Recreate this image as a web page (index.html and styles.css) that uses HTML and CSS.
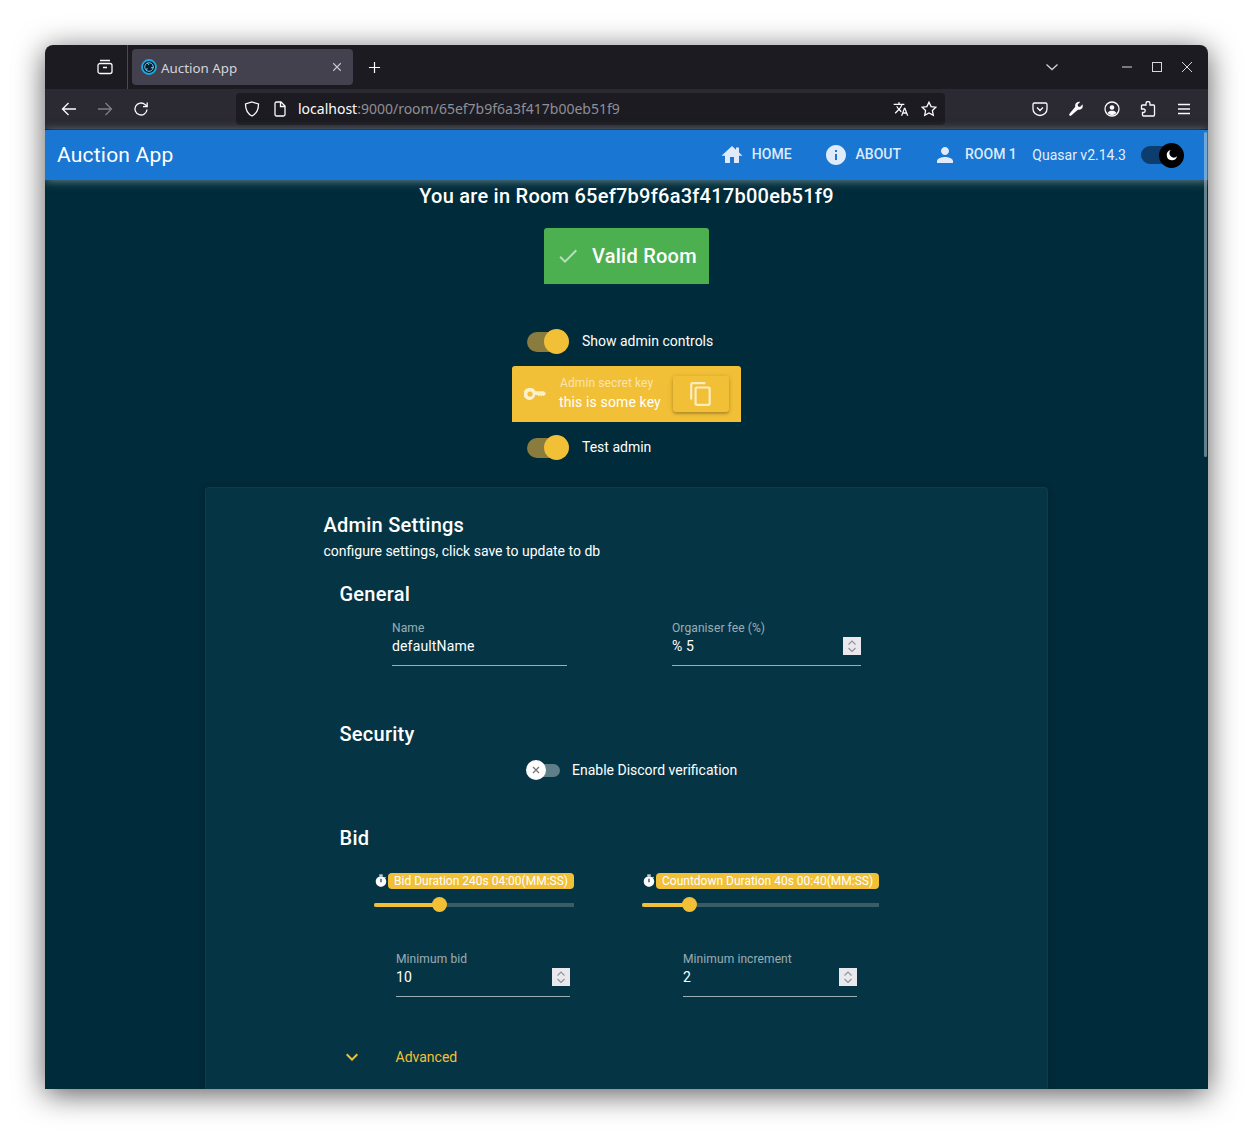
FILE: index.html
```html
<!DOCTYPE html>
<html lang="en">
<head>
    <meta charset="UTF-8">
    <meta name="viewport" content="width=device-width, initial-scale=1.0">
    <title>Auction App</title>
    <link rel="stylesheet" href="styles.css">
</head>
<body>
    <div class="window">
        <div class="tabbar">
            <svg class="view-icon" viewBox="0 0 16 16"><path d="M3 1.500h10M3 4.500h10a2 2 0 0 1 2 2v6a2 2 0 0 1-2 2H3a2 2 0 0 1-2-2v-6a2 2 0 0 1 2-2zM6 8.500h4"/></svg>
            <span class="tab-sep"></span>
            <div class="tab">
                <svg class="favicon" viewBox="0 0 16 16"><circle cx="8" cy="8" r="7" fill="#0a1c28" stroke="#1ba8e4" stroke-width="1.800"/><path d="M8 3.700a4.300 4.300 0 0 1 3.700 6.500M11.700 10.200A4.300 4.300 0 0 1 4.300 10.200M4.300 10.200A4.300 4.300 0 0 1 8 3.700M8 6 6.200 3.900M9.800 8.900l2.700-.5M6.200 9.100 5.300 11.700" fill="none" stroke="#6cc8ee" stroke-width="1"/></svg>
                <span class="tab-title">Auction App</span>
                <svg class="tab-close" viewBox="0 0 12 12"><path d="M1.500 1.500l9 9M10.500 1.500l-9 9"/></svg>
            </div>
            <svg class="new-tab" viewBox="0 0 14 14"><path d="M7 1v12M1 7h12"/></svg>
            <svg class="tab-list" viewBox="0 0 14 8"><path d="M1.500 1.500 7 6.500l5.500-5"/></svg>
            <div class="win-buttons">
                <svg viewBox="0 0 12 12"><path d="M1 6h10"/></svg>
                <svg viewBox="0 0 12 12"><rect x="1.500" y="1.500" width="9" height="9"/></svg>
                <svg viewBox="0 0 12 12"><path d="M1 1l10 10M11 1 1 11"/></svg>
            </div>
        </div>

        <div class="toolbar">
            <div class="nav-buttons">
                <svg viewBox="0 0 16 16"><path d="M15 8H1.500M7.500 2 1.500 8l6 6"/></svg>
                <svg class="off" viewBox="0 0 16 16"><path d="M1 8h13.500M8.500 2l6 6-6 6"/></svg>
                <svg viewBox="0 0 16 16"><path d="M14 8.500A6 6 0 1 1 12 3.500L14 5.500M14.200 1.500v4.200H10"/></svg>
            </div>
            <div class="urlbar">
                <svg class="url-icon" viewBox="0 0 16 16"><path d="M8 1 14.500 3c0 6-1.500 9.500-6.500 12C3 12.500 1.500 9 1.500 3z"/></svg>
                <svg class="url-icon page-icon" viewBox="0 0 16 16"><path d="M3 2.500A1.500 1.500 0 0 1 4.500 1H9l4 4v8.500a1.500 1.500 0 0 1-1.500 1.500h-7A1.500 1.500 0 0 1 3 13.500zM8.500 1.500V5.500h4.500"/></svg>
                <span class="url-text">localhost<span class="url-rest">:9000/room/65ef7b9f6a3f417b00eb51f9</span></span>
                <svg class="url-icon translate-icon" viewBox="0 0 24 24"><path class="fill" d="M12.870 15.070l-2.540-2.510.030-.030A17.520 17.520 0 0 0 14.070 6H17V4h-7V2H8v2H1v2h11.170C11.500 7.920 10.440 9.750 9 11.350 8.070 10.320 7.300 9.190 6.690 8h-2c.73 1.630 1.730 3.170 2.980 4.560l-5.090 5.020L4 19l5-5 3.110 3.110.760-2.040zM18.500 10h-2L12 22h2l1.120-3h4.750L21 22h2l-4.500-12zm-2.620 7l1.620-4.330L19.120 17h-3.240z"/></svg>
                <svg class="url-icon" viewBox="0 0 16 16"><path d="M8 1.200l2.100 4.400 4.700.6-3.400 3.300.9 4.800L8 12l-4.300 2.300.9-4.800L1.200 6.200l4.700-.6z"/></svg>
            </div>
            <div class="tool-buttons">
                <svg viewBox="0 0 16 16"><path d="M2.500 2h11A1.500 1.500 0 0 1 15 3.500V8a7 6.500 0 0 1-14 0V3.500A1.500 1.500 0 0 1 2.500 2zM5 6.500l3 3 3-3"/></svg>
                <svg viewBox="0 0 16 16"><path class="fill" d="M14.600 3.300 12 5.900l-1.900-.5-.5-1.900 2.600-2.600C10.700.6 9.200.9 8.200 1.900 7.200 2.900 6.900 4.400 7.300 5.700L1.500 12.800c-.5.600-.5 1.200 0 1.700.5.500 1.100.5 1.700 0l6.700-5.800c1.300.4 2.800.1 3.800-.9 1-1 1.300-2.500.9-3.800z"/></svg>
                <svg viewBox="0 0 16 16"><circle cx="8" cy="8" r="7"/><circle class="fill" cx="8" cy="6.500" r="2.300"/><path class="fill" d="M3.500 12c1-1.700 2.500-2.300 4.500-2.300s3.500.6 4.500 2.300A6.500 6.500 0 0 1 8 14.200 6.500 6.500 0 0 1 3.500 12z"/></svg>
                <svg viewBox="0 0 16 16"><path d="M6 3V2.500a2 2 0 0 1 4 0V4h3.500A1 1 0 0 1 14.500 5v9a1 1 0 0 1-1 1H3.500a1 1 0 0 1-1-1v-2.500H3.500a1.700 1.700 0 0 0 0-3.500h-2V5a1 1 0 0 1 1-1H6z"/></svg>
                <svg viewBox="0 0 16 16"><path d="M2 3.500h12M2 8h12M2 12.500h12"/></svg>
            </div>
        </div>

        <header class="app-header">
            <div class="app-title">Auction App</div>
            <nav class="app-nav">
                <a href="#"><svg viewBox="0 0 24 24"><path d="M12 3 1.500 12.800H5V20h5v-6h4v6h5v-7.200h3.500L19 9.500V4.500h-3v2.200z"/></svg><span class="nav-text">HOME</span></a>
                <a href="#"><svg viewBox="0 0 24 24"><path d="M12 2C6.480 2 2 6.480 2 12s4.480 10 10 10 10-4.480 10-10S17.520 2 12 2zm1 15h-2v-6h2v6zm0-8h-2V7h2v2z"/></svg><span class="nav-text">ABOUT</span></a>
                <a href="#"><svg viewBox="0 0 24 24"><path d="M12 12c2.210 0 4-1.790 4-4s-1.790-4-4-4-4 1.790-4 4 1.790 4 4 4zm0 2c-2.670 0-8 1.340-8 4v2h16v-2c0-2.660-5.330-4-8-4z"/></svg><span class="nav-text">ROOM 1</span></a>
            </nav>
            <span class="version">Quasar v2.14.3</span>
            <span class="toggle toggle-dark">
                <span class="toggle-track"></span>
                <span class="toggle-thumb"><svg viewBox="0 0 16 16"><path d="M6.500 2.200a6 6 0 1 0 7.300 7.300A5 5 0 0 1 6.500 2.200z"/></svg></span>
            </span>
        </header>
        <div class="scrollbar"></div>

        <main class="page">
            <h1 class="room-title">You are in Room 65ef7b9f6a3f417b00eb51f9</h1>
            <div class="valid-room">
                <svg viewBox="0 0 24 24"><path d="M9 16.170 4.830 12l-1.420 1.410L9 19 21 7l-1.410-1.410z"/></svg>
                Valid Room
            </div>

            <div class="admin-box">
                <label class="toggle-row first">
                    <span class="toggle toggle-on"><span class="toggle-track"></span><span class="toggle-thumb"></span></span>
                    <span class="toggle-text">Show admin controls</span>
                </label>
                <div class="key-banner">
                    <svg class="key-icon" viewBox="0 0 22 12"><path fill-rule="evenodd" d="M6 0a6 6 0 0 1 5.500 3.200H20L22 5.600 20 8h-.8l-1-1.100L17 8.600l-1.200-1.700-1.200 1.700-1.200-1.700h-2.100A6 6 0 1 1 6 0zm0 3.400a2.600 2.600 0 1 0 0 5.200 2.600 2.600 0 0 0 0-5.200z"/></svg>
                    <div class="key-text">
                        <div class="key-label">Admin secret key</div>
                        <div class="key-value">this is some key</div>
                    </div>
                    <button class="copy-btn"><svg viewBox="0 0 24 24"><path d="M16 1H4c-1.100 0-2 .9-2 2v14h2V3h12V1zm3 4H8c-1.100 0-2 .9-2 2v14c0 1.100.9 2 2 2h11c1.100 0 2-.9 2-2V7c0-1.100-.9-2-2-2zm0 16H8V7h11v14z"/></svg></button>
                </div>
                <label class="toggle-row second">
                    <span class="toggle toggle-on"><span class="toggle-track"></span><span class="toggle-thumb"></span></span>
                    <span class="toggle-text">Test admin</span>
                </label>
            </div>

            <section class="card">
                <h2 class="card-title">Admin Settings</h2>
                <div class="card-sub">configure settings, click save to update to db</div>

                <h3 class="section-title general">General</h3>
                <div class="row">
                    <div class="field field-name">
                        <div class="field-label">Name</div>
                        <div class="field-value">defaultName</div>
                    </div>
                    <div class="field field-fee">
                        <div class="field-label">Organiser fee (%)</div>
                        <div class="field-value">% 5
                            <span class="spinner"><svg viewBox="0 0 18 18"><path d="M5.500 7.500 9 4l3.500 3.500M5.500 11 9 14.500 12.500 11"/></svg></span>
                        </div>
                    </div>
                </div>

                <h3 class="section-title security">Security</h3>
                <label class="toggle-row discord">
                    <span class="toggle toggle-off">
                        <span class="toggle-thumb"><svg viewBox="0 0 10 10"><path d="M2 2l6 6M8 2 2 8"/></svg></span>
                        <span class="toggle-track"></span>
                    </span>
                    Enable Discord verification
                </label>

                <h3 class="section-title bid">Bid</h3>
                <div class="row row-sliders">
                    <div class="slider slider-bid">
                        <div class="slider-label">
                            <svg viewBox="0 0 24 24"><path d="M9 1h6v2H9zm10.030 6.390 1.420-1.420c-.43-.51-.9-.99-1.410-1.410l-1.420 1.420A8.962 8.962 0 0 0 12 4c-4.970 0-9 4.030-9 9s4.030 9 9 9 9-4.030 9-9c0-2.120-.74-4.070-1.970-5.610zM13 14h-2V8h2v6z"/></svg>
                            <span class="slider-pill">Bid Duration 240s 04:00(MM:SS)</span>
                        </div>
                        <div class="slider-track">
                            <span class="slider-fill" style="width: 33%"></span>
                            <span class="slider-thumb"></span>
                        </div>
                    </div>
                    <div class="slider slider-countdown">
                        <div class="slider-label">
                            <svg viewBox="0 0 24 24"><path d="M9 1h6v2H9zm10.030 6.390 1.420-1.420c-.43-.51-.9-.99-1.410-1.410l-1.420 1.420A8.962 8.962 0 0 0 12 4c-4.970 0-9 4.030-9 9s4.030 9 9 9 9-4.030 9-9c0-2.120-.74-4.070-1.970-5.610zM13 14h-2V8h2v6z"/></svg>
                            <span class="slider-pill">Countdown Duration 40s 00:40(MM:SS)</span>
                        </div>
                        <div class="slider-track">
                            <span class="slider-fill" style="width: 20.3%"></span>
                            <span class="slider-thumb"></span>
                        </div>
                    </div>
                </div>

                <div class="row row-bid">
                    <div class="field field-min">
                        <div class="field-label">Minimum bid</div>
                        <div class="field-value">10
                            <span class="spinner"><svg viewBox="0 0 18 18"><path d="M5.500 7.500 9 4l3.500 3.500M5.500 11 9 14.500 12.500 11"/></svg></span>
                        </div>
                    </div>
                    <div class="field field-inc">
                        <div class="field-label">Minimum increment</div>
                        <div class="field-value">2
                            <span class="spinner"><svg viewBox="0 0 18 18"><path d="M5.500 7.500 9 4l3.500 3.500M5.500 11 9 14.500 12.500 11"/></svg></span>
                        </div>
                    </div>
                </div>

                <div class="advanced">
                    <svg viewBox="0 0 24 24"><path d="M7.410 8.590 12 13.170l4.590-4.580L18 10l-6 6-6-6z"/></svg>
                    Advanced
                </div>
            </section>
        </main>
    </div>
</body>
</html>
```

FILE: styles.css
```css
* {
    box-sizing: border-box;
}

html, body {
    margin: 0;
    height: 1134px;
    overflow: hidden;
}

body {
    padding: 45px;
    background-color: #fff;
    font-family: Roboto, sans-serif;
}

.window {
    position: relative;
    height: 1044px;
    display: flex;
    flex-direction: column;
    overflow: hidden;
    border-radius: 8px 8px 0 0;
    box-shadow: 0 5px 30px rgba(0, 0, 0, 0.65);
}

svg {
    display: block;
    flex: none;
    fill: none;
    stroke: #fbfbfe;
    stroke-width: 1.3;
}

svg .fill {
    fill: #fbfbfe;
    stroke: none;
}

/* browser chrome */
.tabbar {
    height: 44px;
    flex: none;
    display: flex;
    align-items: center;
    background-color: #1c1b22;
}

.view-icon {
    width: 16px;
    height: 16px;
    margin-left: 52px;
}

.tab-sep {
    width: 1px;
    height: 44px;
    margin-left: 14px;
    background-color: #4a4a52;
}

.tab {
    width: 221px;
    height: 36px;
    margin-left: 4px;
    padding: 0 9px;
    display: flex;
    align-items: center;
    border-radius: 4px;
    background-color: #42414d;
    font-family: "Noto Sans", sans-serif;
    font-size: 13.330px;
    color: #d5d5da;
}

.favicon {
    width: 16px;
    height: 16px;
    stroke: none;
}

.tab-title {
    margin-left: 4px;
    padding-top: 1px;
    flex: 1;
}

.tab-close {
    width: 10px;
    height: 10px;
    margin-right: 2px;
    stroke: #c8c8ce;
}

.new-tab {
    width: 13px;
    height: 13px;
    margin-left: 15px;
}

.tab-list {
    width: 14px;
    height: 8px;
    margin-left: 664px;
    stroke: #d0d0d4;
}

.win-buttons {
    margin-left: 62px;
    display: flex;
    gap: 18px;
}

.win-buttons svg {
    width: 12px;
    height: 12px;
    stroke-width: 1;
    stroke: #d8d8dc;
}

.toolbar {
    height: 41px;
    flex: none;
    display: flex;
    align-items: center;
    padding-bottom: 1px;
    background-color: #2b2a33;
    border-bottom: 1px solid #0c0c0f;
}

.nav-buttons {
    display: flex;
    gap: 20px;
    margin-left: 16px;
}

.nav-buttons svg {
    width: 16px;
    height: 16px;
}

.nav-buttons .off {
    opacity: 0.4;
}

.urlbar {
    width: 709px;
    height: 32px;
    margin-left: 87px;
    padding: 0 8px;
    display: flex;
    align-items: center;
    border-radius: 4px;
    background-color: #1c1b22;
}

.url-icon {
    width: 16px;
    height: 16px;
}

.page-icon {
    margin-left: 12px;
}

.url-text {
    margin-left: 10px;
    flex: 1;
    font-family: "Noto Sans", sans-serif;
    font-size: 14px;
    color: #fbfbfe;
}

.url-rest {
    color: #8f8f96;
}

.translate-icon {
    margin-right: 12px;
}

.tool-buttons {
    display: flex;
    gap: 20px;
    margin-left: 87px;
}

.tool-buttons svg {
    width: 16px;
    height: 16px;
}

/* app header */
.app-header {
    position: relative;
    z-index: 2;
    height: 50px;
    flex: none;
    display: flex;
    align-items: center;
    padding-left: 12px;
    background-color: #1976d2;
    box-shadow: 0 1px 9px rgba(200, 230, 230, 0.5);
    color: #fff;
}

.app-title {
    flex: 1;
    font-size: 21px;
    letter-spacing: 0.01em;
}

.app-nav {
    display: flex;
    align-items: center;
    gap: 32px;
    font-size: 14px;
    font-weight: 500;
}

.app-nav a {
    display: flex;
    align-items: center;
    color: #dfeafa;
    text-decoration: none;
    line-height: 22px;
}

.app-nav svg {
    width: 24px;
    height: 24px;
    margin-right: 8px;
    fill: #dfeafa;
    stroke: none;
}

.nav-text {
    margin-bottom: 2px;
}

.version {
    margin-left: 15.500px;
    margin-right: 15px;
    font-size: 14px;
    color: #e3eefa;
}

.scrollbar {
    position: absolute;
    z-index: 3;
    top: 87px;
    right: 1px;
    width: 3px;
    height: 325px;
    border-radius: 2px;
    background-color: rgba(200, 215, 225, 0.5);
}

/* toggles */
.toggle {
    display: flex;
    align-items: center;
    flex: none;
}

.toggle-thumb {
    display: flex;
    align-items: center;
    justify-content: center;
    flex: none;
    border-radius: 50%;
}

.toggle-on {
    width: 42px;
    height: 25px;
}

.toggle-on .toggle-track {
    width: 38px;
    height: 20px;
    border-radius: 10px;
    background-color: #8a7c3e;
}

.toggle-on .toggle-thumb {
    width: 25px;
    height: 25px;
    margin-left: -21px;
    background-color: #f2c037;
}

.toggle-dark {
    width: 43px;
    height: 25px;
    margin-right: 24px;
}

.toggle-dark .toggle-track {
    width: 40px;
    height: 18px;
    border-radius: 9px;
    background-color: #0d3c6e;
}

.toggle-dark .toggle-thumb {
    width: 25px;
    height: 25px;
    margin-left: -22px;
    background-color: #000;
}

.toggle-dark svg {
    width: 14px;
    height: 14px;
    fill: #fff;
    stroke: none;
}

.toggle-off {
    width: 34px;
    height: 20px;
}

.toggle-off .toggle-thumb {
    position: relative;
    z-index: 1;
    width: 20px;
    height: 20px;
    background-color: #fff;
}

.toggle-off .toggle-track {
    width: 24px;
    height: 13px;
    margin-left: -10px;
    border-radius: 0 7px 7px 0;
    background-color: #5f7f88;
}

.toggle-off svg {
    width: 10px;
    height: 10px;
    stroke: #777;
}

.toggle-row {
    display: flex;
    align-items: center;
    font-size: 14px;
    color: #fff;
}

.toggle-text {
    margin-bottom: 2px;
}

/* page */
.page {
    flex: 1;
    min-height: 0;
    color: #fff;
    background-color: #002b3a;
}

.room-title {
    margin: 0;
    font-size: 20px;
    font-weight: 500;
    line-height: 32px;
    letter-spacing: 0.25px;
    text-align: center;
}

.valid-room {
    width: 165px;
    height: 56px;
    margin: 16px auto 0;
    padding-left: 12px;
    display: flex;
    align-items: center;
    gap: 12px;
    border-radius: 3px 3px 0 0;
    background-color: #4caf50;
    font-size: 20px;
    font-weight: 500;
    letter-spacing: 0.25px;
}

.valid-room svg {
    width: 24px;
    height: 24px;
    fill: rgba(255, 255, 255, 0.6);
    stroke: none;
}

.admin-box {
    width: 229px;
    margin: 0 auto;
}

.admin-box .toggle-row {
    margin-left: 15px;
    gap: 13px;
}

.toggle-row.first {
    margin-top: 45px;
}

.toggle-row.second {
    margin-top: 13px;
}

.key-banner {
    height: 56px;
    margin-top: 12px;
    padding-left: 12px;
    display: flex;
    align-items: center;
    border-radius: 3px 3px 0 0;
    background-color: #f2c037;
}

.key-icon {
    width: 22px;
    height: 12px;
    fill: rgba(255, 255, 255, 0.75);
    stroke: none;
}

.key-text {
    margin-left: 13px;
    width: 114px;
    padding-bottom: 1px;
}

.key-label {
    margin-left: 1px;
    font-size: 12px;
    line-height: 16px;
    letter-spacing: 0.1px;
    color: rgba(255, 255, 255, 0.6);
}

.key-value {
    font-size: 14px;
    line-height: 20px;
    margin-top: 1px;
    letter-spacing: 0.13px;
}

.copy-btn {
    width: 56px;
    height: 36px;
    padding: 0;
    display: flex;
    align-items: center;
    justify-content: center;
    border: none;
    border-radius: 3px;
    background-color: #f2c037;
    box-shadow: 0 1px 5px rgba(0, 0, 0, 0.2), 0 2px 2px rgba(0, 0, 0, 0.14);
}

.copy-btn svg {
    width: 26px;
    height: 26px;
    fill: rgba(255, 255, 255, 0.7);
    stroke: none;
}

/* settings card */
.card {
    width: 843px;
    margin: 27px auto 0;
    padding: 22px 0 40px 118.500px;
    border-radius: 4px;
    background-color: #053545;
    box-shadow: inset 0 0 0 1px rgba(255, 255, 255, 0.04), 0 1px 6px rgba(0, 0, 0, 0.25);
}

.card-title {
    margin: 0;
    font-size: 20px;
    font-weight: 500;
    line-height: 32px;
    letter-spacing: 0.25px;
}

.card-sub {
    font-size: 14px;
    line-height: 20px;
}

.section-title {
    margin: 0 0 0 16px;
    font-size: 20px;
    font-weight: 500;
    line-height: 32px;
    letter-spacing: 0.25px;
}

.section-title.general {
    margin-top: 17px;
}

.section-title.security {
    margin-top: 52px;
}

.section-title.bid {
    margin-top: 42px;
}

.row {
    display: flex;
}

.field {
    height: 56px;
    padding-top: 10px;
    border-bottom: 1px solid rgba(255, 255, 255, 0.6);
}

.field-label {
    font-size: 12px;
    line-height: 16px;
    letter-spacing: 0.1px;
    color: rgba(255, 255, 255, 0.6);
}

.field-value {
    height: 20px;
    display: flex;
    align-items: center;
    justify-content: space-between;
    font-size: 14px;
    line-height: 20px;
    letter-spacing: 0.15px;
}

.spinner {
    width: 18px;
    height: 18px;
    background-color: #e9e9ed;
}

.spinner svg {
    width: 18px;
    height: 18px;
    stroke: #8f8f9d;
    stroke-width: 1.1;
}

.field-name {
    width: 175px;
    margin-left: 68.500px;
}

.field-fee {
    width: 189px;
    margin-left: 105px;
}

.toggle-row.discord {
    margin: 10px 0 0 202.500px;
    gap: 12px;
    height: 20px;
}

.row-sliders {
    margin-top: 19px;
}

.slider-label {
    height: 16px;
    display: flex;
    align-items: center;
}

.slider-label svg {
    width: 14px;
    height: 14px;
    fill: #fff;
    stroke: none;
}

.slider-pill {
    flex: 1;
    height: 16px;
    padding: 0 6px;
    border-radius: 4px;
    background-color: #f2c037;
    font-size: 12px;
    line-height: 16px;
    white-space: nowrap;
}

.slider-track {
    height: 15px;
    margin-top: 8px;
    display: flex;
    align-items: center;
    background: linear-gradient(#3a5c66, #3a5c66) center / 100% 4px no-repeat;
    border-radius: 2px;
}

.slider-fill {
    height: 4px;
    border-radius: 2px 0 0 2px;
    background-color: #f2c037;
}

.slider-thumb {
    width: 15px;
    height: 15px;
    margin-left: -8px;
    border-radius: 50%;
    background-color: #f2c037;
}

.slider-bid {
    width: 200px;
    margin-left: 50.500px;
}

.slider-countdown {
    width: 237px;
    margin-left: 68px;
}

.row-bid {
    margin-top: 29px;
}

.field-min {
    width: 174px;
    margin-left: 72.500px;
}

.field-inc {
    width: 174px;
    margin-left: 113px;
}

.advanced {
    margin: 50px 0 0 16px;
    height: 20px;
    display: flex;
    align-items: center;
    gap: 32px;
    font-size: 14px;
    color: #f2c037;
}

.advanced svg {
    width: 24px;
    height: 24px;
    fill: #f2c037;
    stroke: none;
}
```
